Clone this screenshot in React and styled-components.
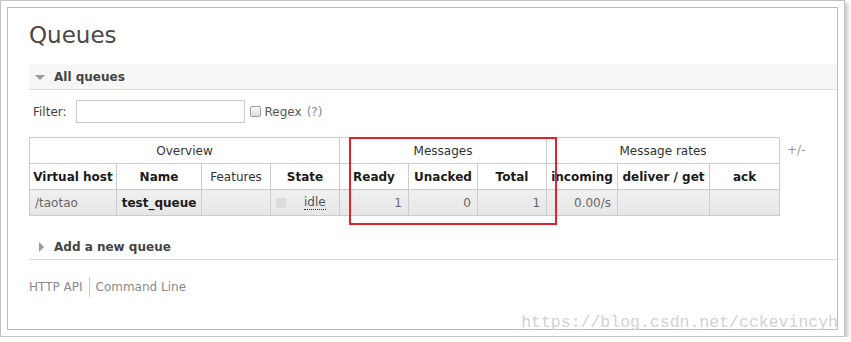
import React from "react";
import styled, { createGlobalStyle } from "styled-components";

const GlobalStyle = createGlobalStyle`
  html, body { margin: 0; padding: 0; background: #fff; }
  body { font-family: "DejaVu Sans", Verdana, sans-serif; }
`;

const Frame = styled.div`
  position: relative;
  box-sizing: border-box;
  width: 845px;
  height: 337px;
  border: 1px solid #c3c3c3;
  padding: 6px;
  background: #fff;
  box-shadow: 3px 3px 4px rgba(0, 0, 0, 0.22);
`;

const Panel = styled.div`
  box-sizing: border-box;
  height: 100%;
  border: 1px solid #bcbcbc;
  padding: 13px 0 0 21px;
`;

const Title = styled.h1`
  margin: 0;
  font-size: 23px;
  line-height: 28px;
  font-weight: normal;
  color: #484848;
`;

const SectionHeader = styled.h2`
  margin: ${(p) => p.$top}px 0 0;
  box-sizing: border-box;
  height: 26px;
  display: flex;
  align-items: center;
  gap: 9px;
  padding-left: 6px;
  background: ${(p) => (p.$open ? "#f7f7f7" : "transparent")};
  border-bottom: 1px solid #dcdcdc;
  font-size: 12px;
  font-weight: bold;
  color: #444;
`;

const Arrow = styled.span`
  display: flex;
  width: 10px;
  height: 10px;
  align-items: center;
  justify-content: center;
  &::before {
    content: "";
    display: block;
    width: 0;
    height: 0;
    ${(p) =>
      p.$open
        ? `border-left: 5px solid transparent; border-right: 5px solid transparent; border-top: 5px solid #9a9a9a; margin-top: 1px;`
        : `border-top: 5px solid transparent; border-bottom: 5px solid transparent; border-left: 5px solid #9a9a9a; margin-left: 2px;`}
  }
`;

const SectionBody = styled.div`
  padding-top: 10px;
`;

const FilterRow = styled.div`
  display: flex;
  align-items: center;
  height: 23px;
  padding-left: 4px;
  font-size: 12px;
  color: #444;
`;

const FilterLabel = styled.label`
  margin-right: 9px;
`;

const FilterInput = styled.input`
  box-sizing: border-box;
  width: 169px;
  height: 23px;
  border: 1px solid #c8c8c8;
  margin: 0 5px 0 0;
  padding: 0 4px;
  font: inherit;
`;

const Check = styled.span`
  box-sizing: border-box;
  display: inline-block;
  width: 11px;
  height: 11px;
  border: 1px solid #9d9d9d;
  border-radius: 2px;
  background: linear-gradient(#fafafa, #dedede);
  margin-right: 4px;
`;

const Muted = styled.span`
  color: ${(p) => p.$c || "#888"};
  margin-left: ${(p) => p.$ml || 0}px;
`;

const TableRow = styled.div`
  display: flex;
  align-items: flex-start;
  margin-top: 14px;
`;

const Table = styled.table`
  border-collapse: collapse;
  table-layout: fixed;
  width: 750px;
  font-size: 12px;
`;

const Col = styled.col`
  width: ${(p) => p.$w}px;
`;

const Tr = styled.tr`
  height: 26px;
`;

const Th = styled.th`
  border: 1px solid #cccccc;
  padding: 0 2px;
  font-weight: ${(p) => (p.$group ? "normal" : "bold")};
  color: ${(p) => (p.$group ? "#333" : "#1a1a1a")};
  text-align: center;
  white-space: nowrap;
  background: #fff;
`;

const Td = styled.td`
  border: 1px solid #cccccc;
  padding: ${(p) => (p.$align === "right" ? "0 6px 0 0" : p.$align === "left" ? "0 0 0 5px" : "0 2px")};
  text-align: ${(p) => p.$align || "center"};
  font-weight: ${(p) => (p.$bold ? "bold" : "normal")};
  color: ${(p) => (p.$bold ? "#1a1a1a" : "#666")};
  background: linear-gradient(#f1f1f1, #e5e5e5);
  white-space: nowrap;
`;

const StateCell = styled.div`
  display: flex;
  align-items: center;
`;

const StatusBox = styled.span`
  display: inline-block;
  width: 10px;
  height: 10px;
  background: #dcdcdc;
  margin-right: 18px;
`;

const Abbr = styled.span`
  color: #555;
  border-bottom: 1px dotted #333;
  line-height: 14px;
`;

const Toggle = styled.span`
  margin-left: 7px;
  line-height: 26px;
  font-size: 12px;
  color: #999;
`;

const Footer = styled.div`
  display: flex;
  margin-top: 17px;
  font-size: 12px;
  line-height: 20px;
  color: #8a8a8a;
`;

const FooterLink = styled.span`
  padding: 0 ${(p) => (p.$first ? 6 : 0)}px 0 ${(p) => (p.$first ? 0 : 6)}px;
  border-left: ${(p) => (p.$first ? "none" : "1px solid #cfcfcf")};
`;

const Highlight = styled.div`
  position: absolute;
  left: 348px;
  top: 136px;
  width: 208px;
  height: 88px;
  box-sizing: border-box;
  border: 2px solid #e4222b;
  pointer-events: none;
`;

const Watermark = styled.div`
  position: absolute;
  right: 6px;
  top: 313px;
  font-family: "Liberation Mono", "DejaVu Sans Mono", monospace;
  font-size: 16.5px;
  line-height: 17px;
  color: #d2d2d2;
  white-space: nowrap;
`;

const cols = [87, 85, 69, 69, 69, 69, 69, 71, 92, 70];

export default function App() {
  return (
    <>
      <GlobalStyle />
      <Frame>
        <Panel>
          <Title>Queues</Title>
          <SectionHeader $open $top={15}>
            <Arrow $open />
            All queues
          </SectionHeader>
          <SectionBody>
            <FilterRow>
              <FilterLabel>Filter:</FilterLabel>
              <FilterInput type="text" />
              <Check />
              <Muted $c="#555">Regex</Muted>
              <Muted $ml={5}>(?)</Muted>
            </FilterRow>
            <TableRow>
              <Table>
                <colgroup>
                  {cols.map((w, i) => (
                    <Col key={i} $w={w} />
                  ))}
                </colgroup>
                <thead>
                  <Tr>
                    <Th $group colSpan={4}>Overview</Th>
                    <Th $group colSpan={3}>Messages</Th>
                    <Th $group colSpan={3}>Message rates</Th>
                  </Tr>
                  <Tr>
                    <Th>Virtual host</Th>
                    <Th>Name</Th>
                    <Th $group>Features</Th>
                    <Th>State</Th>
                    <Th>Ready</Th>
                    <Th>Unacked</Th>
                    <Th>Total</Th>
                    <Th>incoming</Th>
                    <Th>deliver / get</Th>
                    <Th>ack</Th>
                  </Tr>
                </thead>
                <tbody>
                  <Tr>
                    <Td $align="left">/taotao</Td>
                    <Td $bold>test_queue</Td>
                    <Td />
                    <Td $align="left">
                      <StateCell>
                        <StatusBox />
                        <Abbr>idle</Abbr>
                      </StateCell>
                    </Td>
                    <Td $align="right">1</Td>
                    <Td $align="right">0</Td>
                    <Td $align="right">1</Td>
                    <Td $align="right">0.00/s</Td>
                    <Td />
                    <Td />
                  </Tr>
                </tbody>
              </Table>
              <Toggle>+/-</Toggle>
            </TableRow>
          </SectionBody>
          <SectionHeader $top={18}>
            <Arrow />
            Add a new queue
          </SectionHeader>
          <Footer>
            <FooterLink $first>HTTP API</FooterLink>
            <FooterLink>Command Line</FooterLink>
          </Footer>
        </Panel>
        <Highlight />
        <Watermark>https://blog.csdn.net/cckevincyh</Watermark>
      </Frame>
    </>
  );
}
